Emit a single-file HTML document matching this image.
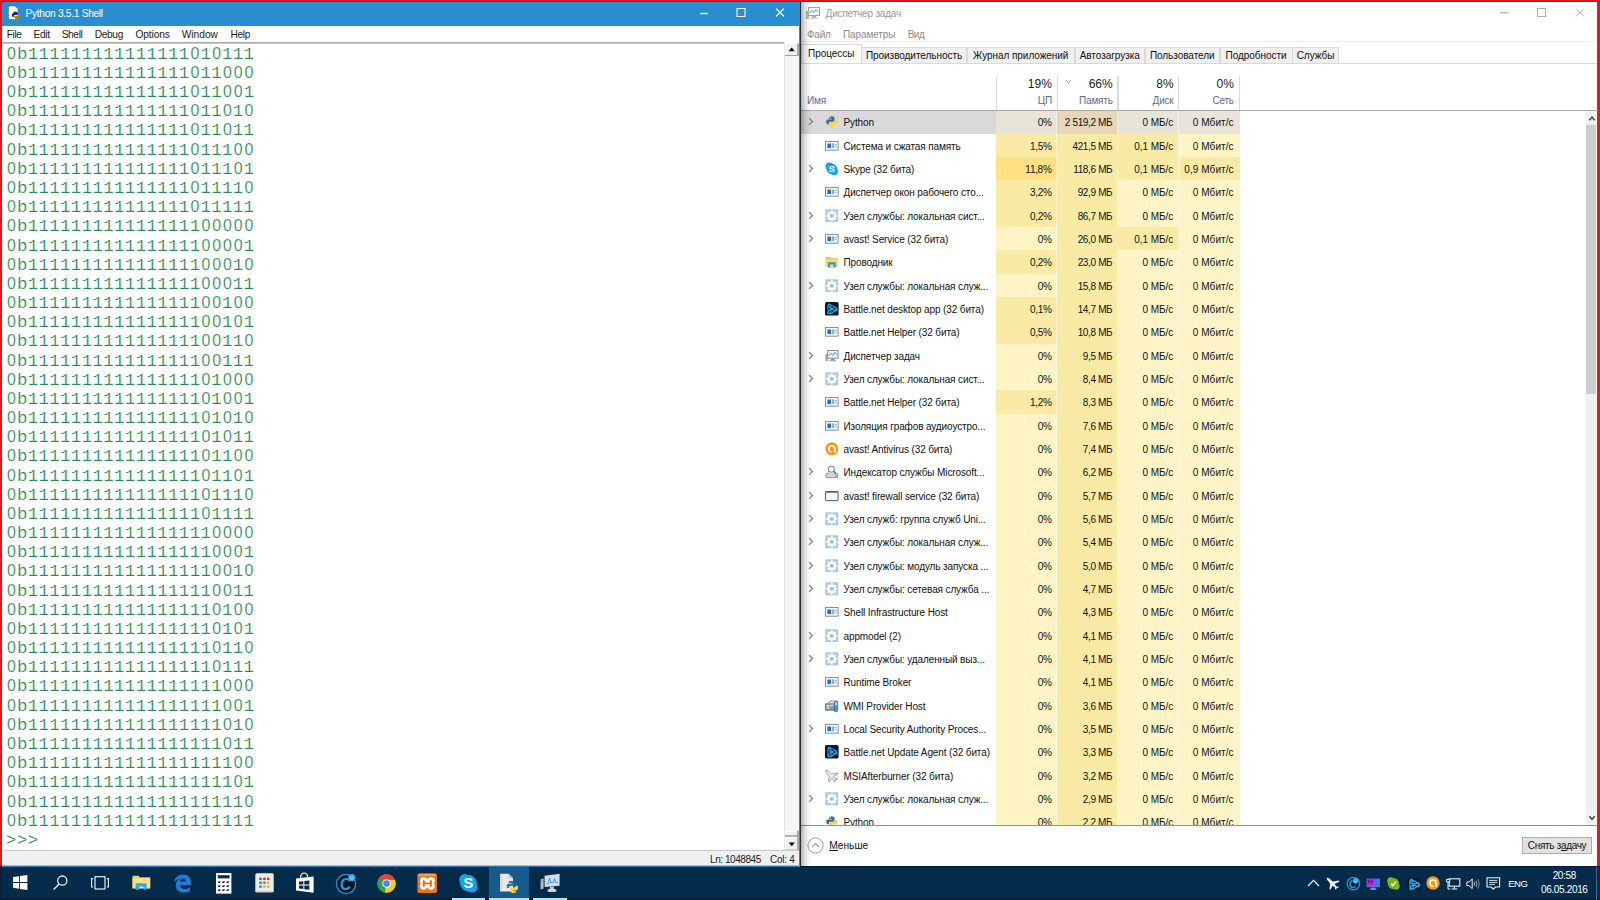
<!DOCTYPE html>
<html lang="ru">
<head>
<meta charset="utf-8">
<title>Python 3.5.1 Shell</title>
<style>
html,body{margin:0;padding:0;}
body{width:1600px;height:900px;overflow:hidden;position:relative;background:#fff;font-family:"Liberation Sans",sans-serif;font-size:10.5px;color:#000;}
div,span,pre,svg{position:absolute;box-sizing:border-box;}
pre{margin:0;}
/* red frame */
.red{background:#ee1220;}
/* python window */
#ptitle{left:2px;top:2px;width:798px;height:23.7px;background:#2a8dd0;}
#ptitle .t{left:23.5px;top:1px;height:23px;line-height:22.6px;color:#fff;font-size:10.2px;letter-spacing:-0.3px;white-space:nowrap;}
.wc{top:0;height:23px;width:38px;}
#pmenu{left:2px;top:26px;width:797px;height:16px;background:#fff;}
#pmenu span{top:1px;height:16px;line-height:16.6px;font-size:10.2px;white-space:nowrap;color:#1a1a1a;}
#psep{left:2px;top:42px;width:782.4px;height:1.6px;background:linear-gradient(#9a9a9a,#d8d8d8);}
#shell{left:6.1px;top:44.8px;font-family:"Liberation Mono",monospace;font-size:17.4px;letter-spacing:0.36px;line-height:19.175px;color:#2a8a57;white-space:pre;-webkit-text-stroke:0.16px #fff;}
#shell i{font-style:normal;font-family:"Liberation Sans",sans-serif;font-size:15.9px;line-height:0;margin-left:0.98px;letter-spacing:0.98px;}
#pscroll{left:784.3px;top:42.6px;width:14.6px;height:808px;background:#f5f5f5;border-left:1px solid #e6e6e6;}
#pstatus{left:4px;top:850.3px;width:795px;height:14.8px;background:#f0f0f0;border-top:1.5px solid #c8c8c8;}
#pstatus span{top:1.3px;height:14px;line-height:14px;font-size:10px;white-space:nowrap;color:#222;}
/* task manager */
#tm{left:801px;top:2px;width:797px;height:864px;background:#fff;}
#tmshadow{z-index:6;left:801px;top:2px;width:11px;height:864px;background:linear-gradient(90deg,rgba(0,0,0,.30),rgba(0,0,0,.13) 35%,rgba(0,0,0,.04) 70%,rgba(0,0,0,0));}
.gray{color:#8c8c8c;}
.tab{top:46.5px;height:16.5px;line-height:16.5px;background:#f0f0f0;border:1px solid #d9d9d9;border-bottom:none;font-size:10px;letter-spacing:-0.05px;text-align:center;white-space:nowrap;color:#111;}
.tab.act{top:44px;height:19px;line-height:18.6px;background:#fff;border-color:#d9d9d9;z-index:2;}
.row{left:801px;width:438.6px;height:23.4px;}
.row .nm{left:42.5px;top:0;height:23.33px;line-height:25.4px;white-space:nowrap;font-size:10px;letter-spacing:-0.12px;color:#111;}
.row .ic{left:24.3px;top:5.1px;width:13.6px;height:13.6px;}
.row .chev{left:7px;top:7px;width:6px;height:9px;}
.row .c{top:0;height:23.4px;line-height:25.4px;text-align:right;padding-right:5.5px;white-space:nowrap;font-size:10px;color:#111;width:60.9px;}
.c1{left:195.1px;letter-spacing:-0.3px;}.c2{left:255.95px;letter-spacing:-0.35px;}.c3{left:316.8px;letter-spacing:-0.05px;}.c4{left:377.65px;letter-spacing:0.05px;padding-right:6px !important;}
.hl{background:#fff4c5;}.hm{background:#f9eba6;}.hh{background:#ffe183;}.hs{background:#e8e4d8;}
.row.sel{background:#d9d9d9;}
.row.sel .c2{background:#e7d6b8;}
.colsep{top:110px;width:1px;height:716px;background:rgba(255,255,255,.45);}
.hd{white-space:nowrap;}
.hbig{font-size:12px;color:#222;text-align:right;width:60.9px;height:18px;line-height:18px;top:75.2px;padding-right:5.5px;}
.hsm{font-size:10px;letter-spacing:-0.2px;color:#5d6a8c;text-align:right;width:60.9px;height:14px;line-height:14px;top:94px;padding-right:5.5px;}
.hline{top:75.7px;width:1.3px;height:34.5px;background:#dadada;}
/* taskbar */
#tb{left:0;top:866px;width:1600px;height:34px;background:#042b4a;}
</style>
</head>
<body>
<!-- ===== Python shell window ===== -->
<div id="ptitle">
  <svg style="left:5px;top:3px;width:16px;height:17px" viewBox="0 0 16 17"><path d="M1.5 1 H8 L11 4 V14.5 H1.5 Z" fill="#fff" stroke="#555" stroke-width="0.7" stroke-dasharray="1.2 0.6"/><path d="M6.2 8.2 Q6.2 6.6 8.6 6.6 Q10.8 6.6 10.8 8.2 V10 H8 Q6.8 10 6.8 11.2 V12 H6 Q4.8 12 4.8 10.2 Q4.8 8.4 6 8.4 Z" fill="#1d1d8f"/><path d="M12.2 12.4 Q12.2 14.2 9.8 14.2 Q7.4 14.2 7.4 12.6 V11 H10.2 Q11.4 11 11.4 9.8 V9 H12.4 Q13.6 9 13.6 10.8 Q13.6 12.4 12.2 12.4 Z" fill="#8f930f"/></svg>
  <span class="t">Python 3.5.1 Shell</span>
  <svg class="wc" style="left:683px" viewBox="0 0 38 23"><path d="M15 11.5 H23" stroke="#fff" stroke-width="1.4"/></svg>
  <svg class="wc" style="left:720px" viewBox="0 0 38 23"><rect x="15" y="6.5" width="8" height="8" fill="none" stroke="#fff" stroke-width="1"/></svg>
  <svg class="wc" style="left:759px" viewBox="0 0 38 23"><path d="M15 6.5 L23 14.5 M23 6.5 L15 14.5" stroke="#fff" stroke-width="1.1"/></svg>
</div>
<div id="pmenu">
  <span style="left:4.8px;letter-spacing:-0.42px">File</span>
  <span style="left:31.6px;letter-spacing:-0.39px">Edit</span>
  <span style="left:59.7px;letter-spacing:-0.39px">Shell</span>
  <span style="left:92.7px;letter-spacing:-0.34px">Debug</span>
  <span style="left:133.4px;letter-spacing:-0.1px">Options</span>
  <span style="left:179.7px">Window</span>
  <span style="left:228.4px;letter-spacing:-0.3px">Help</span>
</div>
<div id="psep"></div>
<pre id="shell"><i>0</i>b111111111111111<i>0</i>1<i>0</i>111
<i>0</i>b111111111111111<i>0</i>11<i>0</i><i>0</i><i>0</i>
<i>0</i>b111111111111111<i>0</i>11<i>0</i><i>0</i>1
<i>0</i>b111111111111111<i>0</i>11<i>0</i>1<i>0</i>
<i>0</i>b111111111111111<i>0</i>11<i>0</i>11
<i>0</i>b111111111111111<i>0</i>111<i>0</i><i>0</i>
<i>0</i>b111111111111111<i>0</i>111<i>0</i>1
<i>0</i>b111111111111111<i>0</i>1111<i>0</i>
<i>0</i>b111111111111111<i>0</i>11111
<i>0</i>b1111111111111111<i>0</i><i>0</i><i>0</i><i>0</i><i>0</i>
<i>0</i>b1111111111111111<i>0</i><i>0</i><i>0</i><i>0</i>1
<i>0</i>b1111111111111111<i>0</i><i>0</i><i>0</i>1<i>0</i>
<i>0</i>b1111111111111111<i>0</i><i>0</i><i>0</i>11
<i>0</i>b1111111111111111<i>0</i><i>0</i>1<i>0</i><i>0</i>
<i>0</i>b1111111111111111<i>0</i><i>0</i>1<i>0</i>1
<i>0</i>b1111111111111111<i>0</i><i>0</i>11<i>0</i>
<i>0</i>b1111111111111111<i>0</i><i>0</i>111
<i>0</i>b1111111111111111<i>0</i>1<i>0</i><i>0</i><i>0</i>
<i>0</i>b1111111111111111<i>0</i>1<i>0</i><i>0</i>1
<i>0</i>b1111111111111111<i>0</i>1<i>0</i>1<i>0</i>
<i>0</i>b1111111111111111<i>0</i>1<i>0</i>11
<i>0</i>b1111111111111111<i>0</i>11<i>0</i><i>0</i>
<i>0</i>b1111111111111111<i>0</i>11<i>0</i>1
<i>0</i>b1111111111111111<i>0</i>111<i>0</i>
<i>0</i>b1111111111111111<i>0</i>1111
<i>0</i>b11111111111111111<i>0</i><i>0</i><i>0</i><i>0</i>
<i>0</i>b11111111111111111<i>0</i><i>0</i><i>0</i>1
<i>0</i>b11111111111111111<i>0</i><i>0</i>1<i>0</i>
<i>0</i>b11111111111111111<i>0</i><i>0</i>11
<i>0</i>b11111111111111111<i>0</i>1<i>0</i><i>0</i>
<i>0</i>b11111111111111111<i>0</i>1<i>0</i>1
<i>0</i>b11111111111111111<i>0</i>11<i>0</i>
<i>0</i>b11111111111111111<i>0</i>111
<i>0</i>b111111111111111111<i>0</i><i>0</i><i>0</i>
<i>0</i>b111111111111111111<i>0</i><i>0</i>1
<i>0</i>b111111111111111111<i>0</i>1<i>0</i>
<i>0</i>b111111111111111111<i>0</i>11
<i>0</i>b1111111111111111111<i>0</i><i>0</i>
<i>0</i>b1111111111111111111<i>0</i>1
<i>0</i>b11111111111111111111<i>0</i>
<i>0</i>b111111111111111111111
&gt;&gt;&gt; </pre>
<div id="pscroll">
  <svg style="left:0;top:0;width:13.6px;height:13.6px" viewBox="0 0 13.6 13.6"><rect x="0" y="0" width="13.6" height="13.6" fill="#f0f0f0"/><path d="M0.6 12.4 V0.6 H12.6" fill="none" stroke="#fff" stroke-width="1"/><path d="M0 12.9 H13 V0.4" fill="none" stroke="#868686" stroke-width="1.3"/><path d="M3.6 8.3 L6.7 4.6 L9.8 8.3 Z" fill="#000"/></svg>
  <svg style="left:0;top:787px;width:13.6px;height:21px" viewBox="0 0 13.6 21"><rect x="0" y="1" width="13.6" height="4.6" fill="#f0f0f0"/><path d="M0.6 5 V1.5 H12.4" fill="none" stroke="#fff" stroke-width="1"/><path d="M0 6 H13" stroke="#868686" stroke-width="1.2"/><rect x="0" y="7" width="13.6" height="14" fill="#f0f0f0"/><path d="M0.6 19.6 V7.6 H12.4" fill="none" stroke="#fff" stroke-width="1"/><path d="M0 20.4 H13 V0.6" fill="none" stroke="#868686" stroke-width="1.3"/><path d="M3.7 12.6 L9.9 12.6 L6.8 16.3 Z" fill="#000"/></svg>
</div>
<div id="pstatus">
  <span style="left:706px;letter-spacing:-0.43px">Ln: 1048845</span>
  <span style="left:766px;letter-spacing:-0.27px">Col: 4</span>
</div>
<div style="left:799px;top:26px;width:1.5px;height:840px;background:#2a8dd0"></div>
<div style="left:2.4px;top:864.9px;width:798px;height:2px;background:linear-gradient(#e4f0fa,#2a7fc0 60%,#1d6aa8);z-index:5"></div>

<!-- ===== Task manager window ===== -->
<div id="tm"></div>
<div style="left:800.4px;top:2px;width:1px;height:864px;background:#2b2f36"></div>
<div id="tmshadow"></div>
<svg style="left:805px;top:6px;width:16px;height:15px" viewBox="0 0 16 15"><rect x="3.5" y="1.5" width="11" height="8" fill="#eef6fc" stroke="#9aa6b0"/><path d="M4.5 7 L7 4.5 L9 6.5 L11 3.5 L13.5 6" fill="none" stroke="#5aa0dc" stroke-width="1"/><rect x="7" y="10" width="4" height="1.5" fill="#a9b1b8"/><rect x="5.5" y="11.5" width="7" height="1.2" fill="#b5bcc2"/><rect x="0.8" y="5" width="3" height="8" fill="#b5bcc2"/><rect x="1.5" y="6" width="1.4" height="1" fill="#6ccf6c"/></svg>
<span class="gray" style="left:825.6px;top:5.5px;height:16px;line-height:16px;font-size:10px;letter-spacing:-0.19px;white-space:nowrap;color:#999">Диспетчер задач</span>
<svg style="left:1486px;top:2px;width:38px;height:23px" viewBox="0 0 38 23"><path d="M14 10.7 H22.5" stroke="#b0b0b0" stroke-width="1.3"/></svg>
<svg style="left:1523px;top:2px;width:38px;height:23px" viewBox="0 0 38 23"><rect x="14.5" y="6.5" width="8" height="8" fill="none" stroke="#b0b0b0" stroke-width="1"/></svg>
<svg style="left:1560px;top:2px;width:38px;height:23px" viewBox="0 0 38 23"><path d="M16 6.5 L24 14.5 M24 6.5 L16 14.5" stroke="#b0b0b0" stroke-width="1"/></svg>
<span class="gray" style="left:807px;top:27px;height:16px;line-height:16px;font-size:10px;letter-spacing:-0.25px;white-space:nowrap">Файл</span>
<span class="gray" style="left:842.9px;top:27px;height:16px;line-height:16px;font-size:10px;letter-spacing:-0.09px;white-space:nowrap">Параметры</span>
<span class="gray" style="left:907.7px;top:27px;height:16px;line-height:16px;font-size:10px;letter-spacing:-0.5px;white-space:nowrap">Вид</span>
<div style="left:801px;top:40.8px;width:797px;height:1px;background:#ececec"></div>
<!-- tabs -->
<div style="left:801px;top:62.5px;width:797px;height:1px;background:#d9d9d9"></div>
<div class="tab act" style="left:801px;width:60.5px">Процессы</div>
<div class="tab" style="left:861px;width:106px">Производительность</div>
<div class="tab" style="left:966.5px;width:108.5px">Журнал приложений</div>
<div class="tab" style="left:1074.5px;width:70.5px">Автозагрузка</div>
<div class="tab" style="left:1144.5px;width:75.5px">Пользователи</div>
<div class="tab" style="left:1219.5px;width:73px">Подробности</div>
<div class="tab" style="left:1292px;width:47px">Службы</div>
<!-- column header -->
<span class="hd hsm" style="left:807px;text-align:left;width:40px;padding:0">Имя</span>
<div class="hline" style="left:995.7px"></div>
<div class="hline" style="left:1056.5px"></div>
<div class="hline" style="left:1117.3px"></div>
<div class="hline" style="left:1178.1px"></div>
<div class="hline" style="left:1239px"></div>
<span class="hd hbig" style="left:996.5px">19%</span>
<span class="hd hbig" style="left:1057.33px">66%</span>
<span class="hd hbig" style="left:1118.17px">8%</span>
<span class="hd hbig" style="left:1179px;padding-right:6px">0%</span>
<span class="hd hsm" style="left:996.5px">ЦП</span>
<span class="hd hsm" style="left:1057.33px">Память</span>
<span class="hd hsm" style="left:1118.17px">Диск</span>
<span class="hd hsm" style="left:1179px;padding-right:6px">Сеть</span>
<svg style="left:1065px;top:78.5px;width:7px;height:5px" viewBox="0 0 7 5"><path d="M1 1 L3.5 3.6 L6 1" fill="none" stroke="#9a9a9a" stroke-width="1"/></svg>
<div style="left:801px;top:110px;width:797px;height:1px;background:#a8a8a8;z-index:3"></div>
<!-- rows -->
<div id="rows" style="left:0;top:0;width:1600px;height:825px;overflow:hidden">
<div class="row sel" style="top:110.40px"><svg class="chev" viewBox="0 0 8 12"><path d="M1.5 1.5 L6 6 L1.5 10.5" fill="none" stroke="#7e7e7e" stroke-width="1.7"/></svg><svg class="ic" viewBox="0 0 14 14"><path d="M4 3.2 Q4 1.2 7 1.2 Q9.8 1.2 9.8 3.2 V6 Q9.8 7 8.6 7 H5.4 Q4 7 4 8.4 V9.4 H2.8 Q1.2 9.4 1.2 7 Q1.2 4.6 2.8 4.6 H7 V4 H4 Z" fill="#366f9f"/><path d="M10 10.8 Q10 12.8 7 12.8 Q4.2 12.8 4.2 10.8 V8.2 Q4.2 7.2 5.4 7.2 H8.6 Q10 7.2 10 5.8 V4.6 H11.2 Q12.8 4.6 12.8 7 Q12.8 9.4 11.2 9.4 H7 V10 H10 Z" fill="#ffd542"/><circle cx="5.5" cy="2.7" r="0.6" fill="#fff"/><circle cx="8.6" cy="11.3" r="0.6" fill="#fff"/></svg><span class="nm">Python</span><span class="c c1 hs">0%</span><span class="c c2 hs">2 519,2 МБ</span><span class="c c3 hs">0 МБ/с</span><span class="c c4 hs">0 Мбит/с</span></div>
<div class="row" style="top:133.73px"><svg class="ic" viewBox="0 0 14 14"><rect x="0.5" y="2.5" width="13" height="9" fill="#fff" stroke="#868686"/><rect x="2.4" y="4.6" width="3.8" height="4.8" fill="#1e6fd0"/><rect x="7" y="4.5" width="2.5" height="5" fill="#7fb2ea"/><rect x="10" y="5" width="2" height="1" fill="#999"/><rect x="10" y="7" width="2" height="1" fill="#999"/></svg><span class="nm">Система и сжатая память</span><span class="c c1 hm">1,5%</span><span class="c c2 hm">421,5 МБ</span><span class="c c3 hm">0,1 МБ/с</span><span class="c c4 hl">0 Мбит/с</span></div>
<div class="row" style="top:157.07px"><svg class="chev" viewBox="0 0 8 12"><path d="M1.5 1.5 L6 6 L1.5 10.5" fill="none" stroke="#7e7e7e" stroke-width="1.7"/></svg><svg class="ic" viewBox="0 0 14 14"><circle cx="4.6" cy="4.6" r="4" fill="#12a5e8"/><circle cx="9.4" cy="9.4" r="4" fill="#12a5e8"/><circle cx="7" cy="7" r="5.4" fill="#12a5e8"/><text x="7" y="10.6" font-family="Liberation Sans, sans-serif" font-size="10" font-weight="bold" fill="#fff" text-anchor="middle">S</text></svg><span class="nm">Skype (32 бита)</span><span class="c c1 hh">11,8%</span><span class="c c2 hm">118,6 МБ</span><span class="c c3 hm">0,1 МБ/с</span><span class="c c4 hm">0,9 Мбит/с</span></div>
<div class="row" style="top:180.40px"><svg class="ic" viewBox="0 0 14 14"><rect x="0.5" y="2.5" width="13" height="9" fill="#fff" stroke="#868686"/><rect x="2.4" y="4.6" width="3.8" height="4.8" fill="#1e6fd0"/><rect x="7" y="4.5" width="2.5" height="5" fill="#7fb2ea"/><rect x="10" y="5" width="2" height="1" fill="#999"/><rect x="10" y="7" width="2" height="1" fill="#999"/></svg><span class="nm">Диспетчер окон рабочего сто...</span><span class="c c1 hm">3,2%</span><span class="c c2 hm">92,9 МБ</span><span class="c c3 hl">0 МБ/с</span><span class="c c4 hl">0 Мбит/с</span></div>
<div class="row" style="top:203.73px"><svg class="chev" viewBox="0 0 8 12"><path d="M1.5 1.5 L6 6 L1.5 10.5" fill="none" stroke="#7e7e7e" stroke-width="1.7"/></svg><svg class="ic" viewBox="0 0 14 14"><rect x="0.3" y="0.3" width="13.4" height="13.4" fill="#a6c9ef"/><g fill="#fff"><circle cx="7" cy="7" r="4.1"/><rect x="5.8" y="1.4" width="2.4" height="11.2"/><rect x="1.4" y="5.8" width="11.2" height="2.4"/><rect x="5.8" y="1.4" width="2.4" height="11.2" transform="rotate(45 7 7)"/><rect x="5.8" y="1.4" width="2.4" height="11.2" transform="rotate(-45 7 7)"/></g><circle cx="7" cy="7" r="1.9" fill="#8fbbe9"/></svg><span class="nm">Узел службы: локальная сист...</span><span class="c c1 hm">0,2%</span><span class="c c2 hm">86,7 МБ</span><span class="c c3 hl">0 МБ/с</span><span class="c c4 hl">0 Мбит/с</span></div>
<div class="row" style="top:227.06px"><svg class="chev" viewBox="0 0 8 12"><path d="M1.5 1.5 L6 6 L1.5 10.5" fill="none" stroke="#7e7e7e" stroke-width="1.7"/></svg><svg class="ic" viewBox="0 0 14 14"><rect x="0.5" y="2.5" width="13" height="9" fill="#fff" stroke="#868686"/><rect x="2.4" y="4.6" width="3.8" height="4.8" fill="#1e6fd0"/><rect x="7" y="4.5" width="2.5" height="5" fill="#7fb2ea"/><rect x="10" y="5" width="2" height="1" fill="#999"/><rect x="10" y="7" width="2" height="1" fill="#999"/></svg><span class="nm">avast! Service (32 бита)</span><span class="c c1 hl">0%</span><span class="c c2 hm">26,0 МБ</span><span class="c c3 hm">0,1 МБ/с</span><span class="c c4 hl">0 Мбит/с</span></div>
<div class="row" style="top:250.40px"><svg class="ic" viewBox="0 0 14 14"><path d="M0.5 2 H5 L6 3.2 H13.5 V12 H0.5 Z" fill="#f2c54a"/><rect x="0.5" y="4.2" width="13" height="8" fill="#fdd96c"/><rect x="3" y="7.4" width="8" height="5.4" fill="#239cf0"/><rect x="5.2" y="9.8" width="3.6" height="3" fill="#fdd96c"/></svg><span class="nm">Проводник</span><span class="c c1 hm">0,2%</span><span class="c c2 hm">23,0 МБ</span><span class="c c3 hl">0 МБ/с</span><span class="c c4 hl">0 Мбит/с</span></div>
<div class="row" style="top:273.73px"><svg class="chev" viewBox="0 0 8 12"><path d="M1.5 1.5 L6 6 L1.5 10.5" fill="none" stroke="#7e7e7e" stroke-width="1.7"/></svg><svg class="ic" viewBox="0 0 14 14"><rect x="0.3" y="0.3" width="13.4" height="13.4" fill="#a6c9ef"/><g fill="#fff"><circle cx="7" cy="7" r="4.1"/><rect x="5.8" y="1.4" width="2.4" height="11.2"/><rect x="1.4" y="5.8" width="11.2" height="2.4"/><rect x="5.8" y="1.4" width="2.4" height="11.2" transform="rotate(45 7 7)"/><rect x="5.8" y="1.4" width="2.4" height="11.2" transform="rotate(-45 7 7)"/></g><circle cx="7" cy="7" r="1.9" fill="#8fbbe9"/></svg><span class="nm">Узел службы: локальная служ...</span><span class="c c1 hl">0%</span><span class="c c2 hm">15,8 МБ</span><span class="c c3 hl">0 МБ/с</span><span class="c c4 hl">0 Мбит/с</span></div>
<div class="row" style="top:297.06px"><svg class="ic" viewBox="0 0 14 14"><rect x="0" y="0" width="14" height="14" rx="1.6" fill="#0b1626"/><g fill="none" stroke="#1fa8ee" stroke-width="1.1"><ellipse cx="8" cy="6" rx="5" ry="1.8" transform="rotate(32 8 6)"/><ellipse cx="7.4" cy="9" rx="5.2" ry="1.8" transform="rotate(-32 7.4 9)"/><ellipse cx="4.6" cy="7" rx="1.7" ry="4.9" transform="rotate(-5 4.6 7)"/></g></svg><span class="nm">Battle.net desktop app (32 бита)</span><span class="c c1 hm">0,1%</span><span class="c c2 hm">14,7 МБ</span><span class="c c3 hl">0 МБ/с</span><span class="c c4 hl">0 Мбит/с</span></div>
<div class="row" style="top:320.40px"><svg class="ic" viewBox="0 0 14 14"><rect x="0.5" y="2.5" width="13" height="9" fill="#fff" stroke="#868686"/><rect x="2.4" y="4.6" width="3.8" height="4.8" fill="#1e6fd0"/><rect x="7" y="4.5" width="2.5" height="5" fill="#7fb2ea"/><rect x="10" y="5" width="2" height="1" fill="#999"/><rect x="10" y="7" width="2" height="1" fill="#999"/></svg><span class="nm">Battle.net Helper (32 бита)</span><span class="c c1 hm">0,5%</span><span class="c c2 hm">10,8 МБ</span><span class="c c3 hl">0 МБ/с</span><span class="c c4 hl">0 Мбит/с</span></div>
<div class="row" style="top:343.73px"><svg class="chev" viewBox="0 0 8 12"><path d="M1.5 1.5 L6 6 L1.5 10.5" fill="none" stroke="#7e7e7e" stroke-width="1.7"/></svg><svg class="ic" viewBox="0 0 14 14"><rect x="2.5" y="1.5" width="11" height="8" fill="#e9f3fb" stroke="#7d8b96"/><path d="M3.5 7 L6 4.5 L8 6.5 L10 3.5 L12.5 6" fill="none" stroke="#3c8bd0" stroke-width="1"/><rect x="6" y="10" width="4" height="1.5" fill="#8a949c"/><rect x="4.5" y="11.5" width="7" height="1.2" fill="#9aa3aa"/><rect x="0.5" y="5" width="2.5" height="7.5" fill="#9aa3aa"/><rect x="1" y="6" width="1.3" height="1" fill="#46b346"/></svg><span class="nm">Диспетчер задач</span><span class="c c1 hl">0%</span><span class="c c2 hm">9,5 МБ</span><span class="c c3 hl">0 МБ/с</span><span class="c c4 hl">0 Мбит/с</span></div>
<div class="row" style="top:367.06px"><svg class="chev" viewBox="0 0 8 12"><path d="M1.5 1.5 L6 6 L1.5 10.5" fill="none" stroke="#7e7e7e" stroke-width="1.7"/></svg><svg class="ic" viewBox="0 0 14 14"><rect x="0.3" y="0.3" width="13.4" height="13.4" fill="#a6c9ef"/><g fill="#fff"><circle cx="7" cy="7" r="4.1"/><rect x="5.8" y="1.4" width="2.4" height="11.2"/><rect x="1.4" y="5.8" width="11.2" height="2.4"/><rect x="5.8" y="1.4" width="2.4" height="11.2" transform="rotate(45 7 7)"/><rect x="5.8" y="1.4" width="2.4" height="11.2" transform="rotate(-45 7 7)"/></g><circle cx="7" cy="7" r="1.9" fill="#8fbbe9"/></svg><span class="nm">Узел службы: локальная сист...</span><span class="c c1 hl">0%</span><span class="c c2 hm">8,4 МБ</span><span class="c c3 hl">0 МБ/с</span><span class="c c4 hl">0 Мбит/с</span></div>
<div class="row" style="top:390.40px"><svg class="ic" viewBox="0 0 14 14"><rect x="0.5" y="2.5" width="13" height="9" fill="#fff" stroke="#868686"/><rect x="2.4" y="4.6" width="3.8" height="4.8" fill="#1e6fd0"/><rect x="7" y="4.5" width="2.5" height="5" fill="#7fb2ea"/><rect x="10" y="5" width="2" height="1" fill="#999"/><rect x="10" y="7" width="2" height="1" fill="#999"/></svg><span class="nm">Battle.net Helper (32 бита)</span><span class="c c1 hm">1,2%</span><span class="c c2 hm">8,3 МБ</span><span class="c c3 hl">0 МБ/с</span><span class="c c4 hl">0 Мбит/с</span></div>
<div class="row" style="top:413.73px"><svg class="ic" viewBox="0 0 14 14"><rect x="0.5" y="2.5" width="13" height="9" fill="#fff" stroke="#868686"/><rect x="2.4" y="4.6" width="3.8" height="4.8" fill="#1e6fd0"/><rect x="7" y="4.5" width="2.5" height="5" fill="#7fb2ea"/><rect x="10" y="5" width="2" height="1" fill="#999"/><rect x="10" y="7" width="2" height="1" fill="#999"/></svg><span class="nm">Изоляция графов аудиоустро...</span><span class="c c1 hl">0%</span><span class="c c2 hm">7,6 МБ</span><span class="c c3 hl">0 МБ/с</span><span class="c c4 hl">0 Мбит/с</span></div>
<div class="row" style="top:437.06px"><svg class="ic" viewBox="0 0 14 14"><circle cx="7" cy="7" r="6.7" fill="#fb9710"/><path d="M7 10.1 A3.1 3.1 0 1 1 10.1 7 V10.2" fill="none" stroke="#fff" stroke-width="1.7" stroke-linecap="round"/></svg><span class="nm">avast! Antivirus (32 бита)</span><span class="c c1 hl">0%</span><span class="c c2 hm">7,4 МБ</span><span class="c c3 hl">0 МБ/с</span><span class="c c4 hl">0 Мбит/с</span></div>
<div class="row" style="top:460.39px"><svg class="chev" viewBox="0 0 8 12"><path d="M1.5 1.5 L6 6 L1.5 10.5" fill="none" stroke="#7e7e7e" stroke-width="1.7"/></svg><svg class="ic" viewBox="0 0 14 14"><path d="M1 9 H13 V13 H1 Z" fill="#dcdcdc" stroke="#7a7a7a" stroke-width="0.8"/><path d="M2.5 9 L4 6.5 H10 L11.5 9" fill="#f2f2f2" stroke="#7a7a7a" stroke-width="0.8"/><circle cx="6.5" cy="4.3" r="3.2" fill="#eef5fb" stroke="#6b7b88" stroke-width="1"/><path d="M8.8 6.6 L11 9" stroke="#6b7b88" stroke-width="1.4"/><rect x="10" y="10.6" width="1.8" height="1.2" fill="#3cb043"/></svg><span class="nm">Индексатор службы Microsoft...</span><span class="c c1 hl">0%</span><span class="c c2 hm">6,2 МБ</span><span class="c c3 hl">0 МБ/с</span><span class="c c4 hl">0 Мбит/с</span></div>
<div class="row" style="top:483.73px"><svg class="chev" viewBox="0 0 8 12"><path d="M1.5 1.5 L6 6 L1.5 10.5" fill="none" stroke="#7e7e7e" stroke-width="1.7"/></svg><svg class="ic" viewBox="0 0 14 14"><rect x="0.6" y="2.6" width="12.8" height="9.4" rx="0.8" fill="#fff" stroke="#3b4f7a" stroke-width="1"/><rect x="0.6" y="2.6" width="12.8" height="1.3" fill="#3f6bc4"/></svg><span class="nm">avast! firewall service (32 бита)</span><span class="c c1 hl">0%</span><span class="c c2 hm">5,7 МБ</span><span class="c c3 hl">0 МБ/с</span><span class="c c4 hl">0 Мбит/с</span></div>
<div class="row" style="top:507.06px"><svg class="chev" viewBox="0 0 8 12"><path d="M1.5 1.5 L6 6 L1.5 10.5" fill="none" stroke="#7e7e7e" stroke-width="1.7"/></svg><svg class="ic" viewBox="0 0 14 14"><rect x="0.3" y="0.3" width="13.4" height="13.4" fill="#a6c9ef"/><g fill="#fff"><circle cx="7" cy="7" r="4.1"/><rect x="5.8" y="1.4" width="2.4" height="11.2"/><rect x="1.4" y="5.8" width="11.2" height="2.4"/><rect x="5.8" y="1.4" width="2.4" height="11.2" transform="rotate(45 7 7)"/><rect x="5.8" y="1.4" width="2.4" height="11.2" transform="rotate(-45 7 7)"/></g><circle cx="7" cy="7" r="1.9" fill="#8fbbe9"/></svg><span class="nm">Узел служб: группа служб Uni...</span><span class="c c1 hl">0%</span><span class="c c2 hm">5,6 МБ</span><span class="c c3 hl">0 МБ/с</span><span class="c c4 hl">0 Мбит/с</span></div>
<div class="row" style="top:530.39px"><svg class="chev" viewBox="0 0 8 12"><path d="M1.5 1.5 L6 6 L1.5 10.5" fill="none" stroke="#7e7e7e" stroke-width="1.7"/></svg><svg class="ic" viewBox="0 0 14 14"><rect x="0.3" y="0.3" width="13.4" height="13.4" fill="#a6c9ef"/><g fill="#fff"><circle cx="7" cy="7" r="4.1"/><rect x="5.8" y="1.4" width="2.4" height="11.2"/><rect x="1.4" y="5.8" width="11.2" height="2.4"/><rect x="5.8" y="1.4" width="2.4" height="11.2" transform="rotate(45 7 7)"/><rect x="5.8" y="1.4" width="2.4" height="11.2" transform="rotate(-45 7 7)"/></g><circle cx="7" cy="7" r="1.9" fill="#8fbbe9"/></svg><span class="nm">Узел службы: локальная служ...</span><span class="c c1 hl">0%</span><span class="c c2 hm">5,4 МБ</span><span class="c c3 hl">0 МБ/с</span><span class="c c4 hl">0 Мбит/с</span></div>
<div class="row" style="top:553.73px"><svg class="chev" viewBox="0 0 8 12"><path d="M1.5 1.5 L6 6 L1.5 10.5" fill="none" stroke="#7e7e7e" stroke-width="1.7"/></svg><svg class="ic" viewBox="0 0 14 14"><rect x="0.3" y="0.3" width="13.4" height="13.4" fill="#a6c9ef"/><g fill="#fff"><circle cx="7" cy="7" r="4.1"/><rect x="5.8" y="1.4" width="2.4" height="11.2"/><rect x="1.4" y="5.8" width="11.2" height="2.4"/><rect x="5.8" y="1.4" width="2.4" height="11.2" transform="rotate(45 7 7)"/><rect x="5.8" y="1.4" width="2.4" height="11.2" transform="rotate(-45 7 7)"/></g><circle cx="7" cy="7" r="1.9" fill="#8fbbe9"/></svg><span class="nm">Узел службы: модуль запуска ...</span><span class="c c1 hl">0%</span><span class="c c2 hm">5,0 МБ</span><span class="c c3 hl">0 МБ/с</span><span class="c c4 hl">0 Мбит/с</span></div>
<div class="row" style="top:577.06px"><svg class="chev" viewBox="0 0 8 12"><path d="M1.5 1.5 L6 6 L1.5 10.5" fill="none" stroke="#7e7e7e" stroke-width="1.7"/></svg><svg class="ic" viewBox="0 0 14 14"><rect x="0.3" y="0.3" width="13.4" height="13.4" fill="#a6c9ef"/><g fill="#fff"><circle cx="7" cy="7" r="4.1"/><rect x="5.8" y="1.4" width="2.4" height="11.2"/><rect x="1.4" y="5.8" width="11.2" height="2.4"/><rect x="5.8" y="1.4" width="2.4" height="11.2" transform="rotate(45 7 7)"/><rect x="5.8" y="1.4" width="2.4" height="11.2" transform="rotate(-45 7 7)"/></g><circle cx="7" cy="7" r="1.9" fill="#8fbbe9"/></svg><span class="nm">Узел службы: сетевая служба ...</span><span class="c c1 hl">0%</span><span class="c c2 hm">4,7 МБ</span><span class="c c3 hl">0 МБ/с</span><span class="c c4 hl">0 Мбит/с</span></div>
<div class="row" style="top:600.39px"><svg class="ic" viewBox="0 0 14 14"><rect x="0.5" y="2.5" width="13" height="9" fill="#fff" stroke="#868686"/><rect x="2.4" y="4.6" width="3.8" height="4.8" fill="#1e6fd0"/><rect x="7" y="4.5" width="2.5" height="5" fill="#7fb2ea"/><rect x="10" y="5" width="2" height="1" fill="#999"/><rect x="10" y="7" width="2" height="1" fill="#999"/></svg><span class="nm">Shell Infrastructure Host</span><span class="c c1 hl">0%</span><span class="c c2 hm">4,3 МБ</span><span class="c c3 hl">0 МБ/с</span><span class="c c4 hl">0 Мбит/с</span></div>
<div class="row" style="top:623.73px"><svg class="chev" viewBox="0 0 8 12"><path d="M1.5 1.5 L6 6 L1.5 10.5" fill="none" stroke="#7e7e7e" stroke-width="1.7"/></svg><svg class="ic" viewBox="0 0 14 14"><rect x="0.3" y="0.3" width="13.4" height="13.4" fill="#a6c9ef"/><g fill="#fff"><circle cx="7" cy="7" r="4.1"/><rect x="5.8" y="1.4" width="2.4" height="11.2"/><rect x="1.4" y="5.8" width="11.2" height="2.4"/><rect x="5.8" y="1.4" width="2.4" height="11.2" transform="rotate(45 7 7)"/><rect x="5.8" y="1.4" width="2.4" height="11.2" transform="rotate(-45 7 7)"/></g><circle cx="7" cy="7" r="1.9" fill="#8fbbe9"/></svg><span class="nm">appmodel (2)</span><span class="c c1 hl">0%</span><span class="c c2 hm">4,1 МБ</span><span class="c c3 hl">0 МБ/с</span><span class="c c4 hl">0 Мбит/с</span></div>
<div class="row" style="top:647.06px"><svg class="chev" viewBox="0 0 8 12"><path d="M1.5 1.5 L6 6 L1.5 10.5" fill="none" stroke="#7e7e7e" stroke-width="1.7"/></svg><svg class="ic" viewBox="0 0 14 14"><rect x="0.3" y="0.3" width="13.4" height="13.4" fill="#a6c9ef"/><g fill="#fff"><circle cx="7" cy="7" r="4.1"/><rect x="5.8" y="1.4" width="2.4" height="11.2"/><rect x="1.4" y="5.8" width="11.2" height="2.4"/><rect x="5.8" y="1.4" width="2.4" height="11.2" transform="rotate(45 7 7)"/><rect x="5.8" y="1.4" width="2.4" height="11.2" transform="rotate(-45 7 7)"/></g><circle cx="7" cy="7" r="1.9" fill="#8fbbe9"/></svg><span class="nm">Узел службы: удаленный выз...</span><span class="c c1 hl">0%</span><span class="c c2 hm">4,1 МБ</span><span class="c c3 hl">0 МБ/с</span><span class="c c4 hl">0 Мбит/с</span></div>
<div class="row" style="top:670.39px"><svg class="ic" viewBox="0 0 14 14"><rect x="0.5" y="2.5" width="13" height="9" fill="#fff" stroke="#868686"/><rect x="2.4" y="4.6" width="3.8" height="4.8" fill="#1e6fd0"/><rect x="7" y="4.5" width="2.5" height="5" fill="#7fb2ea"/><rect x="10" y="5" width="2" height="1" fill="#999"/><rect x="10" y="7" width="2" height="1" fill="#999"/></svg><span class="nm">Runtime Broker</span><span class="c c1 hl">0%</span><span class="c c2 hm">4,1 МБ</span><span class="c c3 hl">0 МБ/с</span><span class="c c4 hl">0 Мбит/с</span></div>
<div class="row" style="top:693.72px"><svg class="ic" viewBox="0 0 14 14"><rect x="0.5" y="5" width="10" height="6.5" fill="#8e9aa6" stroke="#55606b" stroke-width="0.8"/><rect x="1.5" y="6" width="3" height="1.5" fill="#dfe6ec"/><rect x="5.5" y="6" width="3" height="1.5" fill="#dfe6ec"/><rect x="1.5" y="8.5" width="3" height="1.5" fill="#dfe6ec"/><path d="M3 4.5 L7 1.5 L9 3" fill="none" stroke="#6d7781" stroke-width="1"/><rect x="9.5" y="2" width="3.5" height="11" rx="1" fill="#4f8fd0" stroke="#2f5f95" stroke-width="0.7"/><rect x="10.4" y="3.5" width="1.7" height="3" fill="#cfe3f6"/></svg><span class="nm">WMI Provider Host</span><span class="c c1 hl">0%</span><span class="c c2 hm">3,6 МБ</span><span class="c c3 hl">0 МБ/с</span><span class="c c4 hl">0 Мбит/с</span></div>
<div class="row" style="top:717.06px"><svg class="chev" viewBox="0 0 8 12"><path d="M1.5 1.5 L6 6 L1.5 10.5" fill="none" stroke="#7e7e7e" stroke-width="1.7"/></svg><svg class="ic" viewBox="0 0 14 14"><rect x="0.5" y="2.5" width="13" height="9" fill="#fff" stroke="#868686"/><rect x="2.4" y="4.6" width="3.8" height="4.8" fill="#1e6fd0"/><rect x="7" y="4.5" width="2.5" height="5" fill="#7fb2ea"/><rect x="10" y="5" width="2" height="1" fill="#999"/><rect x="10" y="7" width="2" height="1" fill="#999"/></svg><span class="nm">Local Security Authority Proces...</span><span class="c c1 hl">0%</span><span class="c c2 hm">3,5 МБ</span><span class="c c3 hl">0 МБ/с</span><span class="c c4 hl">0 Мбит/с</span></div>
<div class="row" style="top:740.39px"><svg class="ic" viewBox="0 0 14 14"><rect x="0" y="0" width="14" height="14" rx="1.6" fill="#0b1626"/><g fill="none" stroke="#1fa8ee" stroke-width="1.1"><ellipse cx="8" cy="6" rx="5" ry="1.8" transform="rotate(32 8 6)"/><ellipse cx="7.4" cy="9" rx="5.2" ry="1.8" transform="rotate(-32 7.4 9)"/><ellipse cx="4.6" cy="7" rx="1.7" ry="4.9" transform="rotate(-5 4.6 7)"/></g></svg><span class="nm">Battle.net Update Agent (32 бита)</span><span class="c c1 hl">0%</span><span class="c c2 hm">3,3 МБ</span><span class="c c3 hl">0 МБ/с</span><span class="c c4 hl">0 Мбит/с</span></div>
<div class="row" style="top:763.72px"><svg class="ic" viewBox="0 0 14 14"><path d="M0.8 1.2 L3.2 1.8 L6.8 5.2 L12.8 4.2 L13.4 5.4 L8.8 7.6 L10.4 10 L12.4 10 L12.8 11 L10.6 11.6 L10.2 13.2 L9.2 13 L9 11.2 L6.8 9.4 L4.8 13.2 L3.6 12.8 L4.4 7.2 L1.4 3.6 Z" fill="#f0f0f0" stroke="#858a8f" stroke-width="0.8"/></svg><span class="nm">MSIAfterburner (32 бита)</span><span class="c c1 hl">0%</span><span class="c c2 hm">3,2 МБ</span><span class="c c3 hl">0 МБ/с</span><span class="c c4 hl">0 Мбит/с</span></div>
<div class="row" style="top:787.06px"><svg class="chev" viewBox="0 0 8 12"><path d="M1.5 1.5 L6 6 L1.5 10.5" fill="none" stroke="#7e7e7e" stroke-width="1.7"/></svg><svg class="ic" viewBox="0 0 14 14"><rect x="0.3" y="0.3" width="13.4" height="13.4" fill="#a6c9ef"/><g fill="#fff"><circle cx="7" cy="7" r="4.1"/><rect x="5.8" y="1.4" width="2.4" height="11.2"/><rect x="1.4" y="5.8" width="11.2" height="2.4"/><rect x="5.8" y="1.4" width="2.4" height="11.2" transform="rotate(45 7 7)"/><rect x="5.8" y="1.4" width="2.4" height="11.2" transform="rotate(-45 7 7)"/></g><circle cx="7" cy="7" r="1.9" fill="#8fbbe9"/></svg><span class="nm">Узел службы: локальная служ...</span><span class="c c1 hl">0%</span><span class="c c2 hm">2,9 МБ</span><span class="c c3 hl">0 МБ/с</span><span class="c c4 hl">0 Мбит/с</span></div>
<div class="row" style="top:810.39px"><svg class="ic" viewBox="0 0 14 14"><path d="M4 3.2 Q4 1.2 7 1.2 Q9.8 1.2 9.8 3.2 V6 Q9.8 7 8.6 7 H5.4 Q4 7 4 8.4 V9.4 H2.8 Q1.2 9.4 1.2 7 Q1.2 4.6 2.8 4.6 H7 V4 H4 Z" fill="#366f9f"/><path d="M10 10.8 Q10 12.8 7 12.8 Q4.2 12.8 4.2 10.8 V8.2 Q4.2 7.2 5.4 7.2 H8.6 Q10 7.2 10 5.8 V4.6 H11.2 Q12.8 4.6 12.8 7 Q12.8 9.4 11.2 9.4 H7 V10 H10 Z" fill="#ffd542"/><circle cx="5.5" cy="2.7" r="0.6" fill="#fff"/><circle cx="8.6" cy="11.3" r="0.6" fill="#fff"/></svg><span class="nm">Python</span><span class="c c1 hl">0%</span><span class="c c2 hm">2,2 МБ</span><span class="c c3 hl">0 МБ/с</span><span class="c c4 hl">0 Мбит/с</span></div>
<div class="colsep" style="left:1056.4px"></div>
<div class="colsep" style="left:1117.2px"></div>
<div class="colsep" style="left:1178.1px"></div>
</div>
<!-- tm scrollbar -->
<div style="left:1586px;top:111px;width:10.1px;height:714px;background:#f0f0f0"></div>
<div style="left:1586px;top:125.1px;width:10.1px;height:269px;background:#cdcdcd"></div>
<svg style="left:1586px;top:113px;width:12px;height:10px" viewBox="0 0 12 10"><path d="M3.3 7.2 L6 4.2 L8.7 7.2" fill="none" stroke="#505050" stroke-width="1.7"/></svg>
<svg style="left:1586px;top:813px;width:12px;height:10px" viewBox="0 0 12 10"><path d="M3.3 3.2 L6 6.2 L8.7 3.2" fill="none" stroke="#505050" stroke-width="1.7"/></svg>
<!-- tm footer -->
<div style="left:801px;top:824.8px;width:797px;height:1px;background:#909090"></div>
<svg style="left:807px;top:837px;width:17px;height:17px" viewBox="0 0 17 17"><circle cx="8.5" cy="8.5" r="7.6" fill="#fff" stroke="#9a9a9a" stroke-width="1"/><path d="M5 10 L8.5 6.5 L12 10" fill="none" stroke="#9a9a9a" stroke-width="1.1"/></svg>
<span style="left:829.2px;top:838.3px;height:16px;line-height:16px;font-size:10.2px;white-space:nowrap;color:#111"><u>М</u>еньше</span>
<div style="left:1522.4px;top:836.7px;width:69.4px;height:17.3px;background:#e1e1e1;border:1px solid #adadad;font-size:10px;letter-spacing:-0.32px;line-height:16px;text-align:center;white-space:nowrap;color:#111">Снять з<u>а</u>дачу</div>

<!-- ===== red frame ===== -->
<div style="left:0;top:0;width:1600px;height:2px;background:linear-gradient(#f01626,#c80410)"></div>
<div class="red" style="left:0;top:0;width:2.2px;height:866.5px"></div>
<div class="red" style="left:1597.7px;top:0;width:2.3px;height:866.5px"></div>
<div style="left:1597.3px;top:2px;width:0.5px;height:864.5px;background:#7a4a50"></div>

<!-- ===== taskbar ===== -->
<div id="tb">
  <div style="left:0;top:0.3px;width:1600px;height:1.2px;background:#031c36"></div>
  <div style="left:0;top:31.5px;width:1600px;height:2.5px;background:#0e1c33"></div>
  <div style="left:0;top:0;width:2px;height:34px;background:#0c2038"></div>
  <!-- active tile + underlines -->
  <div style="left:489px;top:0.5px;width:40px;height:31.5px;background:#175a8b"></div>
  <div style="left:452px;top:32px;width:33px;height:2px;background:#b4e1f7"></div>
  <div style="left:489px;top:32px;width:40px;height:2px;background:#b4e1f7"></div>
  <div style="left:533px;top:32px;width:34px;height:2px;background:#b4e1f7"></div>
  <!-- start -->
  <svg style="left:13px;top:9px;width:15px;height:15px" viewBox="0 0 15 15"><path d="M0 2.1 L6 1.2 V7 H0 Z M6.9 1.1 L14.4 0 V7 H6.9 Z M0 7.9 H6 V13.7 L0 12.8 Z M6.9 7.9 H14.4 V15 L6.9 13.9 Z" fill="#fff"/></svg>
  <!-- search -->
  <svg style="left:52px;top:7px;width:18px;height:19px" viewBox="0 0 18 19"><circle cx="10.3" cy="7.6" r="4.6" fill="none" stroke="#e6ecf2" stroke-width="1.3"/><path d="M7.1 11 L1.6 16.6" stroke="#e6ecf2" stroke-width="1.4"/></svg>
  <!-- task view -->
  <svg style="left:90px;top:9px;width:20px;height:16px" viewBox="0 0 20 16"><rect x="5" y="1.7" width="10" height="12.3" fill="none" stroke="#e6ecf2" stroke-width="1.2"/><path d="M3.2 3.6 H1.6 V12 H3.2 M16.8 3.6 H18.4 V12 H16.8" fill="none" stroke="#e6ecf2" stroke-width="1.2"/></svg>
  <!-- explorer -->
  <svg style="left:132px;top:9px;width:19px;height:16px" viewBox="0 0 19 16"><path d="M0.5 0.8 H6.6 L7.8 2.2 H18.2 V13 H0.5 Z" fill="#f2c84f"/><rect x="0.5" y="3.2" width="17.7" height="10.4" fill="#fbdf8a"/><path d="M3.6 8.2 H14.6 V14.8 H11.4 V11.4 H7 V14.8 H3.6 Z" fill="#2fa8ef"/><rect x="1.2" y="1.3" width="4.4" height="0.9" fill="#bfe38a"/></svg>
  <!-- edge -->
  <svg style="left:173px;top:8px;width:19px;height:19px" viewBox="0 0 19 19"><path d="M1 8.4 C1.8 3.4 5.6 0.6 9.8 0.6 C14.8 0.6 18 4 18 9 V11 H6.8 C7 13.6 9 15 11.6 15 C13.6 15 15.4 14.4 16.9 13.5 V17.2 C15.2 18.1 13.2 18.6 10.8 18.6 C6 18.6 2.8 15.6 2.8 11.2 C2.8 8.4 4.2 6.2 6.6 4.8 C4.2 5 2.2 6.4 1 8.4 Z M6.9 7.6 H13 C13 5.6 11.8 4.4 10 4.4 C8.3 4.4 7.2 5.6 6.9 7.6 Z" fill="#1a7fdc"/></svg>
  <!-- calculator -->
  <svg style="left:216px;top:6.5px;width:16px;height:21px" viewBox="0 0 16 21"><rect x="0" y="0" width="15.4" height="20.6" fill="#fff"/><rect x="1.8" y="2.2" width="11.8" height="3.2" fill="#0b2b49"/><g fill="#12304e"><path d="M2.6 8.2 h2.2 l-0.8 1.8 h-2.2z M6.8 8.2 h2.2 l-0.8 1.8 h-2.2z M11 8.2 h2.2 l-0.8 1.8 h-2.2z M2.6 12.2 h2.2 l-0.8 1.8 h-2.2z M6.8 12.2 h2.2 l-0.8 1.8 h-2.2z M11 12.2 h2.2 l-0.8 1.8 h-2.2z M2.6 16.2 h2.2 l-0.8 1.8 h-2.2z M6.8 16.2 h2.2 l-0.8 1.8 h-2.2z M11 16.2 h2.2 l-0.8 1.8 h-2.2z"/></g></svg>
  <!-- app launcher -->
  <svg style="left:254.5px;top:7px;width:19px;height:20px" viewBox="0 0 19 20"><rect x="0.3" y="0.3" width="18.4" height="19" rx="1.6" fill="#ececec"/><rect x="0.3" y="17.8" width="18.4" height="1.5" rx="0.8" fill="#cfcfcf"/><g><rect x="4.3" y="4.6" width="2.4" height="2.4" fill="#e8261c"/><rect x="8.2" y="4.6" width="2.4" height="2.4" fill="#e8261c"/><rect x="12.1" y="4.6" width="2.4" height="2.4" fill="#e8261c"/><rect x="4.3" y="8.5" width="2.4" height="2.4" fill="#129a48"/><rect x="8.2" y="8.5" width="2.4" height="2.4" fill="#2d86ee"/><rect x="12.1" y="8.5" width="2.4" height="2.4" fill="#f9ab12"/><rect x="4.3" y="12.4" width="2.4" height="2.4" fill="#129a48"/><rect x="8.2" y="12.4" width="2.4" height="2.4" fill="#f9ab12"/><rect x="12.1" y="12.4" width="2.4" height="2.4" fill="#f9ab12"/></g></svg>
  <!-- store -->
  <svg style="left:295px;top:6px;width:20px;height:22px" viewBox="0 0 20 22"><path d="M5.6 6 C5.6 2.4 7.4 1 9 1 C10.8 1 12.6 2.4 12.6 5" fill="none" stroke="#fff" stroke-width="1.2"/><path d="M1 6.6 L18.6 4.6 V20.8 L1 18.4 Z" fill="#fff"/><path d="M4 9.6 L8.4 9.2 V12.6 H4 Z M9.3 9.1 L14.4 8.6 V12.6 H9.3 Z M4 13.5 H8.4 V17 L4 16.6 Z M9.3 13.5 H14.4 V17.8 L9.3 17.2 Z" fill="#0b2b49"/></svg>
  <!-- curse client -->
  <svg style="left:335px;top:6px;width:23px;height:23px" viewBox="0 0 23 23"><circle cx="11" cy="12" r="9.6" fill="#141414" stroke="#1e9af0" stroke-width="1.2"/><path d="M14.6 8.6 C13.6 7.4 12.4 7 11.2 7 C8.4 7 6.6 9.2 6.6 12.2 C6.6 15 8.2 17 10.8 17 C12.6 17 14 16.2 14.8 14.6" fill="none" stroke="#1e9af0" stroke-width="2.2"/><circle cx="16.8" cy="5.6" r="3.6" fill="#2aa6f5"/><circle cx="15.6" cy="4.8" r="0.6" fill="#fff"/><circle cx="18" cy="4.8" r="0.6" fill="#fff"/><path d="M15 6.4 Q16.8 8 18.6 6.4" fill="none" stroke="#fff" stroke-width="0.7"/></svg>
  <!-- chrome -->
  <svg style="left:377px;top:7.5px;width:19px;height:19px" viewBox="0 0 19 19"><circle cx="9.5" cy="9.5" r="9.2" fill="#e8453c"/><path d="M9.5 9.5 L1.55 4.9 A9.2 9.2 0 0 0 7.9 18.55 L12.6 10.4 Z" fill="#2ea44f"/><path d="M9.5 9.5 L7.9 18.55 A9.2 9.2 0 0 0 17.9 5.7 H9.5 Z" fill="#f7c935"/><path d="M1.55 4.9 A9.2 9.2 0 0 1 17.9 5.7 H9.5 Z" fill="#e8453c"/><circle cx="9.5" cy="9.5" r="4.3" fill="#f4f4f4"/><circle cx="9.5" cy="9.5" r="3.3" fill="#4a86ee"/></svg>
  <!-- xampp -->
  <svg style="left:417.3px;top:7px;width:21px;height:21px" viewBox="0 0 21 21"><rect x="0.4" y="0.4" width="19.6" height="19.6" rx="1.8" fill="#ec7416"/><rect x="1.4" y="0.8" width="17.6" height="2.2" rx="1" fill="#f4a05c"/><g fill="#fff"><circle cx="6.6" cy="7.7" r="3.7"/><circle cx="14.1" cy="7.7" r="3.7"/><circle cx="6.6" cy="13.1" r="3.7"/><circle cx="14.1" cy="13.1" r="3.7"/><rect x="6.6" y="6" width="7.5" height="8.8"/></g><path d="M6.8 8 V12.9 M13.9 8 V12.9 M6.8 10.4 H13.9" fill="none" stroke="#f06a08" stroke-width="1.9" stroke-linecap="round"/></svg>
  <!-- skype -->
  <svg style="left:458px;top:7px;width:21px;height:21px" viewBox="0 0 21 21"><circle cx="6.8" cy="6.6" r="5.6" fill="#12a5e8"/><circle cx="14" cy="14" r="5.6" fill="#12a5e8"/><circle cx="10.4" cy="10.3" r="8.2" fill="#12a5e8"/><text x="10.4" y="15.4" font-family="Liberation Sans, sans-serif" font-size="14.5" font-weight="bold" fill="#fff" text-anchor="middle">S</text></svg>
  <!-- idle -->
  <svg style="left:499px;top:7px;width:21px;height:21px" viewBox="0 0 21 21"><path d="M1 0.8 H9.6 L14 5.2 V18.6 H1 Z" fill="#e9e9ea"/><path d="M9.6 0.8 V5.2 H14 Z" fill="#bfc2c6"/><path d="M2.2 1.6 V18" stroke="#aeb2b7" stroke-width="1" stroke-dasharray="1.2 1"/><g transform="translate(0.9 -0.3)"><path d="M8.6 10.2 Q8.6 8 11.6 8 Q14.4 8 14.4 10 V12.4 Q14.4 13.4 13.2 13.4 H10.6 Q9.2 13.4 9.2 14.8 V15.4 H8.2 Q6.8 15.4 6.8 13.2 Q6.8 11 8.2 11 H11.6 V10.4 H8.6 Z" fill="#3671a3"/><path d="M16.4 18 Q16.4 20.2 13.4 20.2 Q10.6 20.2 10.6 18.2 V15.8 Q10.6 14.8 11.8 14.8 H14.4 Q15.8 14.8 15.8 13.4 V12.8 H16.8 Q18.2 12.8 18.2 15 Q18.2 17.2 16.8 17.2 H13.4 V17.8 H16.4 Z" fill="#ffd23e"/></g></svg>
  <!-- task manager -->
  <svg style="left:540px;top:7px;width:22px;height:21px" viewBox="0 0 22 21"><path d="M0.6 6.4 L3.6 5.2 V15.6 L0.6 16.4 Z" fill="#b9bcbc"/><rect x="1.2" y="7" width="1" height="1" fill="#3fc24a"/><path d="M4.6 2.8 L19.6 0.8 V12.8 L4.6 14 Z" fill="#d8dad9"/><path d="M6 4 L18.4 2.4 V11.6 L6 12.6 Z" fill="#c7def0"/><path d="M6.4 10.8 L8.4 10.4 L9.6 5 L10.8 10 L12 9.2 L13.4 9.6 L14.6 5.6 L15.8 9.6 L18 9.4" fill="none" stroke="#3e8ed4" stroke-width="0.9"/><path d="M10 13.8 L13.6 13.4 L14.2 16 L9.6 16.4 Z" fill="#bfc2c1"/><ellipse cx="12" cy="17.4" rx="4.6" ry="1.6" fill="#d4d6d5"/></svg>
  <!-- tray -->
  <svg style="left:1307px;top:13px;width:13px;height:8px" viewBox="0 0 13 8"><path d="M1 7 L6.5 1.4 L12 7" fill="none" stroke="#f0f3f6" stroke-width="1.3"/></svg>
  <svg style="left:1326.4px;top:10.8px;width:14px;height:13px" viewBox="0 0 14 13"><path d="M0.6 0.6 L3 1.2 L6.6 4.6 L12.8 3.6 L13.4 4.8 L8.6 7 L10.4 9.4 L12.4 9.4 L12.8 10.4 L10.6 11 L10.2 12.6 L9.2 12.4 L9 10.6 L6.6 8.8 L4.6 12.6 L3.4 12.2 L4.2 6.6 L1.2 3 Z" fill="#eceef0"/></svg>
  <svg style="left:1346px;top:10px;width:15px;height:15px" viewBox="0 0 15 15"><circle cx="7.4" cy="7.6" r="6.2" fill="#101820" stroke="#1e9af0" stroke-width="1.3"/><path d="M9.8 9.8 C9 11 8 11.4 7 11.4 C5.2 11.4 4 10 4 8 C4 6.2 5 5 6.6 4.6" fill="none" stroke="#1e9af0" stroke-width="1.5"/><circle cx="9.6" cy="4.8" r="2.8" fill="#3cb0f7"/><path d="M8.4 5.4 Q9.6 6.4 10.8 5.4" fill="none" stroke="#fff" stroke-width="0.6"/></svg>
  <svg style="left:1366px;top:11.5px;width:15px;height:13px" viewBox="0 0 15 13"><rect x="0.6" y="0.6" width="13.4" height="8.6" fill="#4b6cf2"/><rect x="1.4" y="1.4" width="6.2" height="5.4" fill="#d010c8"/><rect x="2.4" y="2.6" width="1.6" height="2" fill="#3a0838"/><rect x="5" y="2.6" width="1.6" height="2" fill="#3a0838"/><rect x="5.4" y="9.6" width="3.8" height="1" fill="#8a8f96"/><rect x="4.2" y="10.6" width="6.2" height="1" fill="#c8ccd0"/></svg>
  <svg style="left:1386px;top:10px;width:15px;height:15px" viewBox="0 0 15 15"><circle cx="4.8" cy="4.8" r="3.6" fill="#7bb51c"/><circle cx="10" cy="10.2" r="3.6" fill="#7bb51c"/><circle cx="7.4" cy="7.5" r="5.6" fill="#7bb51c"/><path d="M5 7.8 L6.8 9.6 L10 5.8" fill="none" stroke="#fff" stroke-width="1.4"/></svg>
  <svg style="left:1406.5px;top:10.5px;width:14px;height:14px" viewBox="0 0 14 14"><rect x="0.6" y="1" width="12.8" height="12.6" rx="1.2" fill="#14182c"/><g fill="none" stroke="#1fb2f2" stroke-width="1.2"><ellipse cx="8" cy="6.4" rx="5" ry="1.8" transform="rotate(32 8 6.4)"/><ellipse cx="7.4" cy="9.2" rx="5.2" ry="1.8" transform="rotate(-32 7.4 9.2)"/><ellipse cx="4.6" cy="7.2" rx="1.7" ry="4.9" transform="rotate(-5 4.6 7.2)"/></g></svg>
  <svg style="left:1426.2px;top:10.3px;width:14px;height:14px" viewBox="0 0 14 14"><circle cx="7" cy="7" r="6.7" fill="#ff9a0a"/><path d="M7 10.1 A3.1 3.1 0 1 1 10.1 7 V10.2" fill="none" stroke="#fff" stroke-width="1.7" stroke-linecap="round"/></svg>
  <svg style="left:1446px;top:11.5px;width:15px;height:12px" viewBox="0 0 15 12"><rect x="3.2" y="0.8" width="10.6" height="7.4" fill="none" stroke="#eef1f4" stroke-width="1.1"/><path d="M8.4 8.4 V10.8 M5.6 11 H11.4" stroke="#eef1f4" stroke-width="1.1"/><rect x="0.6" y="1.4" width="3.2" height="2.4" fill="#0b2b49" stroke="#eef1f4" stroke-width="0.9"/><path d="M2 4 V11 H4.4" fill="none" stroke="#eef1f4" stroke-width="1"/></svg>
  <svg style="left:1465.5px;top:11.5px;width:16px;height:12px" viewBox="0 0 16 12"><path d="M0.8 4 H3 L6.2 1 V10.6 L3 7.6 H0.8 Z" fill="none" stroke="#eef1f4" stroke-width="1"/><path d="M8 4 Q9.2 5.8 8 7.6" fill="none" stroke="#eef1f4" stroke-width="0.9"/><path d="M10 2.6 Q12 5.8 10 9" fill="none" stroke="#b9c3cd" stroke-width="0.9"/><path d="M12 1.2 Q14.8 5.8 12 10.4" fill="none" stroke="#7f8e9e" stroke-width="0.9"/></svg>
  <svg style="left:1486px;top:10.5px;width:15px;height:14px" viewBox="0 0 15 14"><path d="M1 0.8 H13.6 V10 H9.4 L7.3 12.2 L5.2 10 H1 Z" fill="none" stroke="#eef1f4" stroke-width="1.1"/><path d="M3.2 3.4 H11.4 M3.2 5.4 H11.4 M3.2 7.4 H9" stroke="#eef1f4" stroke-width="0.9"/></svg>
  <span style="left:1508.3px;top:10.8px;height:14px;line-height:14px;font-size:9.6px;letter-spacing:-0.62px;color:#fff;white-space:nowrap">ENG</span>
  <span style="left:1536.3px;top:2.8px;width:56px;height:14px;line-height:14px;font-size:10px;letter-spacing:-0.35px;color:#fff;white-space:nowrap;text-align:center">20:58</span>
  <span style="left:1536.3px;top:17.1px;width:56px;height:14px;line-height:14px;font-size:10px;letter-spacing:-0.35px;color:#fff;white-space:nowrap;text-align:center">06.05.2016</span>
  <div style="left:1596.4px;top:0.5px;width:0.8px;height:33px;background:#4e6a83"></div>
</div>
</body>
</html>
